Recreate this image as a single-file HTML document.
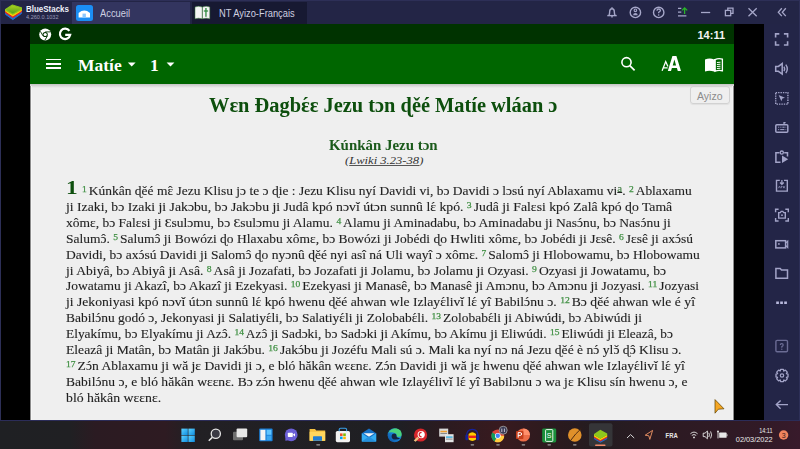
<!DOCTYPE html>
<html><head><meta charset="utf-8">
<style>
*{margin:0;padding:0;box-sizing:border-box}
html,body{width:800px;height:449px;overflow:hidden;background:#232546;font-family:"Liberation Sans",sans-serif}
.a{position:absolute;white-space:nowrap}
svg.a{overflow:visible}
.hd{font-family:"Liberation Serif",serif;font-weight:bold;color:#0d4f0d;will-change:transform}
.ln{position:absolute;white-space:nowrap;font-family:"Liberation Serif",serif;font-size:13px;line-height:16px;color:#1f1f1f;transform-origin:0 0;will-change:transform;-webkit-text-stroke:0.12px #222}
.cb{position:relative}.cb i{position:absolute;left:0;width:100%;text-align:center;top:0;font-style:normal}
.vn{color:#3f8f42;font-size:9.2px;font-weight:normal;-webkit-text-stroke:0.25px #3f8f42;position:relative;top:-2.6px;margin-right:1.9px}
.ch{color:#0d4f0d;font-weight:bold;font-size:19.5px;position:relative;top:-2px;margin-right:6px}
.fn{color:#48964a;font-size:10.5px;position:relative;top:-3.2px;text-decoration:underline;text-underline-offset:0px}
</style></head><body>
<!-- top bar -->
<div class="a" style="left:0;top:0;width:800px;height:24px;background:#232546"></div>
<div class="a" style="left:72px;top:2px;width:118px;height:22px;background:#33355f"></div>
<div class="a" style="left:192px;top:2px;width:115px;height:22px;background:#171932"></div>
<!-- logo -->
<svg class="a" style="left:0;top:0" width="26" height="24" viewBox="0 0 26 24">
 <defs><linearGradient id="lg" x1="0" y1="0" x2="0" y2="1"><stop offset="0" stop-color="#b2d41e"/><stop offset="1" stop-color="#4e9c1c"/></linearGradient></defs>
 <path d="M5.6 10.6 L12.8 15.4 L21.4 10.2 L21.4 13.6 L12.8 19.6 L5.6 14.4 Z" fill="#1b73d4" stroke="#1b73d4" stroke-width="1" stroke-linejoin="round"/>
 <path d="M5.6 10.2 L12.8 15 L21.4 9.8 L21.4 12 L12.8 17.6 L5.6 12.8 Z" fill="#e2242b" stroke="#e2242b" stroke-width="1" stroke-linejoin="round"/>
 <path d="M5.6 9.6 L12.8 14.2 L21.4 9.2 L21.4 10.6 L12.8 16 L5.6 11.2 Z" fill="#ffd000" stroke="#ffd000" stroke-width="1" stroke-linejoin="round"/>
 <path d="M5.6 9.6 L12.4 5 L21.4 7.8 L21.4 9.2 L12.8 14.2 L5.6 9.9 Z" fill="url(#lg)" stroke="#8cc41e" stroke-width="1.2" stroke-linejoin="round"/>
</svg>
<div class="a" style="left:25.6px;top:3.2px;font:bold 9.4px 'Liberation Sans',sans-serif;color:#eef0f8;transform:scaleX(0.85);transform-origin:0 0" id="bsname">BlueStacks</div>
<div class="a" style="left:26px;top:13px;font:6.2px 'Liberation Sans',sans-serif;color:#9a9bb8;transform:scaleX(0.9);transform-origin:0 0" id="bsver">4.260.0.1032</div>
<!-- tab1 icon -->
<div class="a" style="left:76px;top:4.5px;width:16.5px;height:16px;background:#1b8ef5;border-radius:2.5px"></div>
<svg class="a" style="left:76px;top:4.5px" width="17" height="16" viewBox="0 0 17 16">
 <path d="M2.6 8 Q8.3 3.2 14 8 L14 12.5 L2.6 12.5Z" fill="#fff"/>
 <rect x="6.5" y="8.6" width="3.4" height="3.9" fill="#8cc8ff"/>
</svg>
<div class="a" id="acc" style="left:100px;top:8px;font:10px 'Liberation Sans',sans-serif;color:#cfd0e0;transform-origin:0 0;transform:scaleX(0.935)">Accueil</div>
<!-- tab2 icon -->
<svg class="a" style="left:194px;top:5px" width="17" height="15" viewBox="0 0 17 15">
 <path d="M1 2 Q4.5 0.6 8.2 2 L8.2 13.8 Q4.5 12.6 1 13.8Z" fill="#f4f4f4" stroke="#3a7a3a" stroke-width="0.5"/>
 <path d="M8.5 2 Q12.2 0.6 15.8 2 L15.8 13.8 Q12.2 12.6 8.5 13.8Z" fill="#f4f4f4" stroke="#3a7a3a" stroke-width="0.5"/>
 <rect x="11.3" y="3" width="1.3" height="8.8" fill="#2e8a3e"/>
 <rect x="9.8" y="5.4" width="4.3" height="1.2" fill="#2e8a3e"/>
</svg>
<div class="a" id="ntay" style="left:218.5px;top:8px;font:10px 'Liberation Sans',sans-serif;color:#cfd0e0;transform-origin:0 0;transform:scaleX(0.93)">NT Ayizo-Français</div>
<!-- top right icons -->
<svg class="a" style="left:600px;top:0" width="200" height="24" viewBox="600 0 200 24" fill="none" stroke="#a6a7c9" stroke-width="1.4">
 <path d="M609 15.4 Q609.7 13.6 609.7 11.6 Q609.7 8.8 612 8.8 Q614.3 8.8 614.3 11.6 Q614.3 13.6 615 15.4" fill="none" stroke-width="1.4"/>
 <path d="M607.3 15.6 L616.7 15.6" />
 <path d="M612 15.6 L612 17.6" />
 <circle cx="612" cy="7.6" r="0.7" fill="#a6a7c9" stroke="none"/>
 <circle cx="635.4" cy="12.4" r="5.2"/>
 <circle cx="635.4" cy="10.3" r="1.3" stroke-width="1.1"/>
 <path d="M633.1 15.3 Q633.1 12.9 635.4 12.9 Q637.7 12.9 637.7 15.3 Z" fill="#a6a7c9" stroke="none"/>
 <circle cx="658.7" cy="12.4" r="5.2"/>
 <path d="M657 10.8 Q657 9 658.7 9 Q660.4 9 660.4 10.6 Q660.4 11.7 658.7 12.3 L658.7 13.3" stroke-width="1.3"/>
 <circle cx="658.7" cy="15" r="0.75" fill="#a6a7c9" stroke="none"/>
 <path d="M678 8.4 L681.3 8.4 M678 12.2 L681.3 12.2 M678 15.8 L686.4 15.8" stroke-width="1.2"/>
 <path d="M684.6 14 L684.6 8.2 M682 10.4 L684.6 7.8 L687.2 10.4" stroke="#28b428" stroke-width="1.3"/>
 <path d="M701 12.5 L710.2 12.5" stroke-width="1.3"/>
 <rect x="725.4" y="10.4" width="5.3" height="5.3" stroke-width="1.3"/>
 <path d="M727.8 10.3 L727.8 8.1 L733 8.1 L733 13.3 L730.8 13.3" stroke-width="1.3"/>
 <path d="M748.5 8.2 L756.7 16.2 M756.7 8.2 L748.5 16.2" stroke-width="1.3"/>
 <path d="M781.8 8.3 L778.3 12.2 L781.8 16.1 M785.8 8.3 L782.3 12.2 L785.8 16.1" stroke-width="1.3"/>
</svg>
<!-- left / right black -->
<div class="a" style="left:1px;top:24px;width:29px;height:396px;background:#000"></div>
<div class="a" style="left:734px;top:24px;width:30px;height:396px;background:#000"></div>
<div class="a" style="left:764px;top:24px;width:36px;height:396px;background:#232547"></div>
<div class="a" style="left:0;top:420px;width:800px;height:1px;background:#2b2c58"></div>
<div class="a" style="left:0;top:0;width:800px;height:1px;background:#2d2f57"></div>
<div class="a" style="left:0;top:0;width:1px;height:420px;background:#2d2f57"></div>
<div class="a" style="left:799px;top:0;width:1px;height:420px;background:#2d2f57"></div>

<svg class="a" style="left:764px;top:24px" width="36" height="396" viewBox="764 24 36 396" fill="none" stroke="#a3a4c8" stroke-width="1.6">
 <!-- fullscreen -->
 <path d="M775.6 37.6 L775.6 33.9 L779.3 33.9 M783.9 33.9 L787.6 33.9 L787.6 37.6 M787.6 41.3 L787.6 45 L783.9 45 M779.3 45 L775.6 45 L775.6 41.3"/>
 <!-- volume -->
 <path d="M775.7 66.4 L778.4 66.4 L782.2 63.6 L782.2 74 L778.4 71.3 L775.7 71.3 Z" stroke-width="1.5"/>
 <path d="M784 66.6 Q785.4 68.9 784 71.2" stroke-width="1.4"/>
 <path d="M785.8 64.6 Q788.8 68.9 785.8 73.2" stroke-width="1.4"/>
 <!-- cursor select -->
 <rect x="775.7" y="92.6" width="12.2" height="11.5" stroke-width="1.4" stroke-dasharray="1.4 1"/>
 <path d="M778.6 95 L785 97.7 L782.4 98.6 L781.4 101.3 Z" fill="#a3a4c8" stroke="none"/>
 <!-- keyboard -->
 <rect x="775.8" y="124.8" width="12" height="7.4" rx="1" stroke-width="1.5"/>
 <path d="M784 124.5 L784 122.7 L785.6 122.7" stroke-width="1.3"/>
 <path d="M778.2 127.2 L779.2 127.2 M780.4 127.2 L781.4 127.2 M782.4 127.2 L784.6 127.2 M785.6 127.2 L786.2 127.2 M778.2 129.6 L779.2 129.6 M780.2 129.6 L784.4 129.6 M785.6 129.6 L786.2 129.6" stroke-width="1"/>
 <!-- clipboard play -->
 <path d="M780.5 162.2 L775.9 162.2 L775.9 152.8 L779.5 152.8 M784.2 152.8 L787.5 152.8 L787.5 156.6" stroke-width="1.5"/>
 <circle cx="781.8" cy="152.6" r="1.6" stroke-width="1.3"/>
 <path d="M782 155.4 L788.2 159.2 L782 163 Z" fill="#a3a4c8" stroke="none"/>
 <!-- apk -->
 <path d="M779.8 180.4 L776.5 180.4 L776.5 191.1 L787.3 191.1 L787.3 180.4 L784 180.4" stroke-width="1.4"/>
 <path d="M781.9 180 L781.9 184.2 M780 182.5 L781.9 184.4 L783.8 182.5" stroke-width="1.3"/>
 <path d="M778.4 188.2 L779.4 186.2 L780.4 188.2 M781.2 188.2 L781.2 186.2 L782.4 186.6 L781.2 187.2 M783.5 186.2 L783.5 188.2 M783.6 187.3 L785.2 186.2 M783.8 187.1 L785.2 188.2" stroke-width="0.6"/>
 <!-- camera -->
 <path d="M775.6 212.3 L775.6 209.3 L778.6 209.3 M785.3 209.3 L788.3 209.3 L788.3 212.3 M788.3 218 L788.3 221 L785.3 221 M778.6 221 L775.6 221 L775.6 218" stroke-width="1.4"/>
 <path d="M778.7 212.6 L780.3 212.6 L781.2 211.4 L782.8 211.4 L783.7 212.6 L785.3 212.6 L785.3 218.1 L778.7 218.1 Z" stroke-width="1.4"/>
 <circle cx="782" cy="215.2" r="0.9" fill="#a3a4c8" stroke="none"/>
 <!-- video -->
 <rect x="775.8" y="240.7" width="9.8" height="7.2" stroke-width="1.5"/>
 <path d="M785.6 243.2 L787.7 241.1 L787.7 247.5 L785.6 245.4" stroke-width="1.2"/>
 <circle cx="778.9" cy="243.9" r="0.9" fill="#a3a4c8" stroke="none"/>
 <!-- folder -->
 <path d="M775.9 268.6 L780.2 268.6 L781.5 270.1 L787.5 270.1 L787.5 278.2 L775.9 278.2 Z" stroke-width="1.5"/>
 <!-- dots -->
 <rect x="776.2" y="301.5" width="2.7" height="2.5" fill="#b8b9dc" stroke="none"/>
 <rect x="780.2" y="301.5" width="2.7" height="2.5" fill="#b8b9dc" stroke="none"/>
 <rect x="784.2" y="301.5" width="2.7" height="2.5" fill="#b8b9dc" stroke="none"/>
 <!-- help box -->
 <rect x="775.9" y="340.4" width="11.6" height="11.4" rx="1.2" stroke="#6b6c94" stroke-width="1.4"/>
 <path d="M780.3 345.1 Q780.3 343.6 781.7 343.6 Q783.2 343.6 783.2 345 Q783.2 346 781.8 346.6 L781.8 347.7" stroke="#6b6c94" stroke-width="1.2"/>
 <circle cx="781.8" cy="349.3" r="0.7" fill="#6b6c94" stroke="none"/>
 <!-- gear -->
 <path d="M780.6 369.3 L783.4 369.3 L783.8 371 L785.4 370.1 L787.3 372.1 L786.4 373.6 L788 374.1 L788 376.9 L786.4 377.3 L787.3 378.9 L785.4 380.9 L783.8 380 L783.4 381.6 L780.6 381.6 L780.2 380 L778.6 380.9 L776.7 378.9 L777.6 377.3 L776 376.9 L776 374.1 L777.6 373.6 L776.7 372.1 L778.6 370.1 L780.2 371 Z" stroke-width="1.3" stroke-linejoin="round"/>
 <circle cx="782" cy="375.5" r="1.7" stroke-width="1.2"/>
 <!-- back arrow -->
 <path d="M788 404.6 L776.6 404.6 M780.6 400.4 L776.3 404.6 L780.6 408.8" stroke-width="1.4"/>
</svg>

<div class="a" style="left:30px;top:24px;width:704px;height:20px;background:#003300"></div>
<div class="a" style="left:30px;top:44px;width:704px;height:40px;background:#006600"></div>
<!-- chrome icon -->
<svg class="a" style="left:38px;top:27px" width="15" height="15" viewBox="0 0 15 15">
 <circle cx="7.2" cy="7.5" r="6" fill="#fff"/>
 <circle cx="7.2" cy="7.5" r="2.6" fill="#003300"/>
 <circle cx="7.2" cy="7.5" r="1.6" fill="#fff"/>
 <path d="M7.2 4.9 L12.4 4.9" stroke="#003300" stroke-width="0.9"/>
 <path d="M4.95 8.8 L2.35 4.3" stroke="#003300" stroke-width="0.9"/>
 <path d="M9.45 8.8 L6.85 13.3" stroke="#003300" stroke-width="0.9"/>
</svg>
<!-- G icon -->
<svg class="a" style="left:57px;top:27.2px" width="16" height="16" viewBox="0 0 16 16">
 <path d="M12.4 3.9 A5.2 5.2 0 1 0 13.2 7.9 L8.2 7.9" fill="none" stroke="#fff" stroke-width="2.2"/>
</svg>
<div class="a" style="left:697.5px;top:28.5px;font:bold 11px 'Liberation Sans',sans-serif;color:#f4f4f4">14:11</div>
<!-- toolbar -->
<div class="a" style="left:45.8px;top:58.6px;width:15.2px;height:1.7px;background:#fff"></div>
<div class="a" style="left:45.8px;top:63.1px;width:15.2px;height:1.7px;background:#fff"></div>
<div class="a" style="left:45.8px;top:67.2px;width:15.2px;height:1.7px;background:#fff"></div>
<div class="a" style="left:78px;top:54.5px;font:bold 17.5px 'Liberation Serif',serif;color:#fff">Matíe</div>
<svg class="a" style="left:127px;top:62px" width="10" height="6" viewBox="0 0 10 6"><path d="M0.8 0.4 L8.6 0.4 L4.7 4.4Z" fill="#fff"/></svg>
<div class="a" style="left:150px;top:54.5px;font:bold 17.5px 'Liberation Serif',serif;color:#fff">1</div>
<svg class="a" style="left:166px;top:62px" width="10" height="6" viewBox="0 0 10 6"><path d="M0.6 0.4 L8.4 0.4 L4.5 4.4Z" fill="#fff"/></svg>
<svg class="a" style="left:618px;top:54px" width="20" height="20" viewBox="618 54 20 20" fill="none" stroke="#fff">
 <circle cx="626.5" cy="62.2" r="4.6" stroke-width="1.6"/>
 <path d="M629.8 65.6 L634.6 70.4" stroke-width="1.7"/>
</svg>
<svg class="a" style="left:655px;top:50px" width="80" height="28" viewBox="655 50 80 28">
 <path fill="#fff" fill-rule="evenodd" d="M667.8 70.9 L672.4 56.1 L676.4 56.1 L681 70.9 L677.8 70.9 L676.9 68.1 L671.9 68.1 L671 70.9 Z M672.7 65.6 L676.1 65.6 L674.4 59.6 Z"/>
 <path fill="none" stroke="#fff" stroke-width="1.3" d="M662.1 70.8 L665.7 61.6 L667.9 66.6 M663.6 67.8 L667.6 67.8"/>
 <path fill="#fff" d="M705 59.4 Q709.8 57.6 714.2 59.4 L714.2 71.6 Q709.8 70.2 705 71.4 Z"/>
 <path fill="none" stroke="#fff" stroke-width="1.3" d="M715 59.6 Q718.6 58 722.4 59.2 L722.4 70.8 Q718.6 69.9 715 71.2 Z"/>
 <path fill="#fff" d="M714 58.9 L715.6 58.9 L715.6 71.6 L714 71.6 Z"/>
 <path d="M716.9 62.5 L720.5 62.2 M716.9 64.5 L720.5 64.2 M716.9 66.5 L720.5 66.2 M716.9 68.5 L720.5 68.2" stroke="#fff" stroke-width="1"/>
</svg>
<!-- content -->
<div class="a" style="left:30px;top:84px;width:704px;height:336px;background:#efefef"></div>
<div class="a" style="left:30px;top:84px;width:704px;height:4px;background:linear-gradient(#c4c4c4,#efefef)"></div>
<div class="a" style="left:690.2px;top:86.2px;width:40px;height:18.2px;border:1px solid #d2d2d2;border-radius:3px;box-shadow:0 1px 1px rgba(0,0,0,0.06)"></div>
<div class="a" style="left:697px;top:89.5px;font:10.5px 'Liberation Sans',sans-serif;color:#8c8c8c">Ayizo</div>
<!-- cursor -->
<svg class="a" style="left:712px;top:397px" width="16" height="19" viewBox="712 397 16 19">
 <path d="M715 399.6 L724 408.8 L718.4 409.2 L715 413.2 Z" fill="#f5a623" stroke="#5a4000" stroke-width="0.7" stroke-linejoin="round"/>
</svg>
<div class="a" style="left:30px;top:86px;width:1px;height:334px;background:#8c8c8c"></div>
<div class="a" style="left:31px;top:86px;width:1px;height:334px;background:#f6f6f6"></div>
<div class="a" style="left:732px;top:86px;width:1px;height:334px;background:#f4f4f4"></div>
<div class="a" style="left:733px;top:86px;width:1px;height:334px;background:#8c8c8c"></div>

<div class="a hd" style="left:208.5px;top:93.8px;font-size:20.4px;transform:scaleX(1.000);transform-origin:0 0" id="title">Wɛn Đagb<span class="cb">ɛ<i>ˊ</i></span>ɛ Jezu tɔn ɖěé Matíe wláan ɔ</div>
<div class="a hd" style="left:328.5px;top:137.5px;font-size:13.6px;color:#1a5a1a;transform:scaleX(1.097);transform-origin:0 0" id="sub">Kúnkân Jezu tɔn</div>
<div class="a" style="left:344.5px;top:154px;font:italic 11.2px 'Liberation Serif',serif;color:#333;transform:scaleX(1.125);transform-origin:0 0" id="ref">(<u style="text-decoration-color:#555">Lwiki 3.23-38</u>)</div>
<div class="a hd" id="chnum" style="left:65.6px;top:177px;font-size:19.5px;transform:scaleX(1.2);transform-origin:0 0">1</div>
<div class="ln" id="l0" style="top:182.97px;left:82.40px;transform:scaleX(1.0375)"><span class="vn">1</span>Kúnkân ɖěé m<span class="cb">ɛ<i>ˆ</i></span> Jezu Klisu jɔ te ɔ ɖie : Jezu Klisu nyí Davidi vi, bɔ Davidi ɔ lɔsú nyí Ablaxamu vi<span class="fn">a</span>. <span class="vn">2</span>Ablaxamu</div>
<div class="ln" id="l1" style="top:198.89px;left:65.50px;transform:scaleX(1.0553)">ji Izaki, bɔ Izaki ji Jakɔbu, bɔ Jakɔbu ji Judâ kpó nɔvǐ útɔn sunnû l<span class="cb">ɛ<i>ˊ</i></span> kpó. <span class="vn">3</span>Judâ ji Falɛsi kpó Zalâ kpó ɖo Tamâ</div>
<div class="ln" id="l2" style="top:214.81px;left:65.50px;transform:scaleX(1.0395)">xômɛ, bɔ Falɛsi ji Ɛsulɔmu, bɔ Ɛsulɔmu ji Alamu. <span class="vn">4</span>Alamu ji Aminadabu, bɔ Aminadabu ji Nas<span class="cb">ɔ<i>ˊ</i></span>nu, bɔ Nas<span class="cb">ɔ<i>ˊ</i></span>nu ji</div>
<div class="ln" id="l3" style="top:230.73px;left:65.50px;transform:scaleX(1.0382)">Salum<span class="cb">ɔ<i>ˆ</i></span>. <span class="vn">5</span>Salum<span class="cb">ɔ<i>ˆ</i></span> ji Bowózi ɖo Hlaxabu xômɛ, bɔ Bowózi ji Jobédi ɖo Hwliti xômɛ, bɔ Jobédi ji Jɛsê. <span class="vn">6</span>Jɛsê ji ax<span class="cb">ɔ<i>ˊ</i></span>sú</div>
<div class="ln" id="l4" style="top:246.65px;left:65.50px;transform:scaleX(1.0397)">Davidi, bɔ ax<span class="cb">ɔ<i>ˊ</i></span>sú Davidi ji Salom<span class="cb">ɔ<i>ˆ</i></span> ɖo nyɔnû ɖěé nyi asî ná Uli wayî ɔ xômɛ. <span class="vn">7</span>Salom<span class="cb">ɔ<i>ˆ</i></span> ji Hlobowamu, bɔ Hlobowamu</div>
<div class="ln" id="l5" style="top:262.57px;left:65.50px;transform:scaleX(1.0479)">ji Abiyâ, bɔ Abiyâ ji Asâ. <span class="vn">8</span>Asâ ji Jozafati, bɔ Jozafati ji Jolamu, bɔ Jolamu ji Ozyasi. <span class="vn">9</span>Ozyasi ji Jowatamu, bɔ</div>
<div class="ln" id="l6" style="top:278.49px;left:65.50px;transform:scaleX(1.0389)">Jowatamu ji Akazî, bɔ Akazî ji Ezekyasi. <span class="vn">10</span>Ezekyasi ji Manasê, bɔ Manasê ji Amɔnu, bɔ Amɔnu ji Jozyasi. <span class="vn">11</span>Jozyasi</div>
<div class="ln" id="l7" style="top:294.41px;left:65.50px;transform:scaleX(1.0499)">ji Jekoniyasi kpó nɔvǐ útɔn sunnû l<span class="cb">ɛ<i>ˊ</i></span> kpó hwenu ɖěé ahwan wle Izlay<span class="cb">ɛ<i>ˊ</i></span>livǐ l<span class="cb">ɛ<i>ˊ</i></span> yî Babil<span class="cb">ɔ<i>ˊ</i></span>nu ɔ. <span class="vn">12</span>Bɔ ɖěé ahwan wle é yî</div>
<div class="ln" id="l8" style="top:310.33px;left:65.50px;transform:scaleX(1.0367)">Babil<span class="cb">ɔ<i>ˊ</i></span>nu godó ɔ, Jekonyasi ji Salatiy<span class="cb">ɛ<i>ˊ</i></span>li, bɔ Salatiy<span class="cb">ɛ<i>ˊ</i></span>li ji Zolobab<span class="cb">ɛ<i>ˊ</i></span>li. <span class="vn">13</span>Zolobab<span class="cb">ɛ<i>ˊ</i></span>li ji Abiwúdi, bɔ Abiwúdi ji</div>
<div class="ln" id="l9" style="top:326.25px;left:65.50px;transform:scaleX(1.0298)">Elyakímu, bɔ Elyakímu ji Az<span class="cb">ɔ<i>ˆ</i></span>. <span class="vn">14</span>Az<span class="cb">ɔ<i>ˆ</i></span> ji Sadɔki, bɔ Sadɔki ji Akímu, bɔ Akímu ji Eliwúdi. <span class="vn">15</span>Eliwúdi ji Eleazâ, bɔ</div>
<div class="ln" id="l10" style="top:342.17px;left:65.50px;transform:scaleX(1.0473)">Eleazâ ji Matân, bɔ Matân ji Jak<span class="cb">ɔ<i>ˊ</i></span>bu. <span class="vn">16</span>Jak<span class="cb">ɔ<i>ˊ</i></span>bu ji Jozéfu Mali sú ɔ. Mali ka nyí nɔ ná Jezu ɖěé è n<span class="cb">ɔ<i>ˊ</i></span> yl<span class="cb">ɔ<i>ˇ</i></span> ɖ<span class="cb">ɔ<i>ˆ</i></span> Klisu ɔ.</div>
<div class="ln" id="l11" style="top:358.09px;left:65.50px;transform:scaleX(1.0452)"><span class="vn">17</span>Z<span class="cb">ɔ<i>ˊ</i></span>n Ablaxamu ji wă jɛ Davidi ji ɔ, e bló hăkân wɛɛnɛ. Z<span class="cb">ɔ<i>ˊ</i></span>n Davidi ji wă jɛ hwenu ɖěé ahwan wle Izlay<span class="cb">ɛ<i>ˊ</i></span>livǐ l<span class="cb">ɛ<i>ˊ</i></span> yî</div>
<div class="ln" id="l12" style="top:374.01px;left:65.50px;transform:scaleX(1.0439)">Babil<span class="cb">ɔ<i>ˊ</i></span>nu ɔ, e bló hăkân wɛɛnɛ. Bɔ z<span class="cb">ɔ<i>ˊ</i></span>n hwenu ɖěé ahwan wle Izlay<span class="cb">ɛ<i>ˊ</i></span>livǐ l<span class="cb">ɛ<i>ˊ</i></span> yî Babilɔnu ɔ wa jɛ Klisu sín hwenu ɔ, e</div>
<div class="ln" id="l13" style="top:389.93px;left:65.50px;transform:scaleX(1.0617)">bló hăkân wɛɛnɛ.</div>
<div class="a" style="left:0;top:421px;width:800px;height:28px;background:linear-gradient(90deg,#1f2023 0.0px,#202023 70.0px,#2b1b22 95.0px,#2e1b22 165.0px,#222024 190.0px,#1f1f23 400.0px,#2a1b20 440.0px,#381a1f 500.0px,#2a1a1e 560.0px,#231c20 600.0px,#2c1a22 660.0px,#311a26 760.0px,#381a2b 800.0px)"></div>
<svg class="a" style="left:0;top:421px" width="800" height="28" viewBox="0 421 800 28">
 <defs>
  <linearGradient id="wg" x1="0" y1="0" x2="1" y2="1"><stop offset="0" stop-color="#5fd3ff"/><stop offset="1" stop-color="#0f8de0"/></linearGradient>
 </defs>
 <!-- start -->
 <rect x="181.4" y="428.6" width="6.4" height="6.4" fill="url(#wg)"/>
 <rect x="188.4" y="428.6" width="6.4" height="6.4" fill="url(#wg)"/>
 <rect x="181.4" y="435.6" width="6.4" height="6.4" fill="url(#wg)"/>
 <rect x="188.4" y="435.6" width="6.4" height="6.4" fill="url(#wg)"/>
 <!-- search -->
 <circle cx="215.8" cy="433.8" r="4.6" fill="#3a3a44" stroke="#e6e6e6" stroke-width="1.3"/>
 <path d="M212.3 437.4 L208.8 440.8" stroke="#e6e6e6" stroke-width="1.5"/>
 <!-- task view -->
 <rect x="233" y="431.8" width="10" height="8.4" rx="1" fill="#6f6f6f"/>
 <rect x="236.6" y="428.4" width="10.6" height="8.8" rx="1" fill="#e8e8e8"/>
 <!-- widgets -->
 <rect x="259.2" y="428.5" width="13.4" height="12.8" rx="1" fill="#1a7fd8"/>
 <rect x="260.4" y="429.8" width="5" height="10.4" fill="#f4f4f4"/>
 <rect x="266.6" y="429.8" width="4.8" height="5" fill="#5fc4ff"/>
 <rect x="266.6" y="435.6" width="4.8" height="4.6" fill="#3aa6f0"/>
 <!-- teams -->
 <circle cx="291.2" cy="434.8" r="6.4" fill="#6b5fd6"/>
 <path d="M285.4 440.8 L285.4 436.4 L288.6 440.2Z" fill="#6b5fd6"/>
 <rect x="287.8" y="432.8" width="5" height="4.2" rx="0.8" fill="#fff"/>
 <path d="M292.8 434.8 L295 433.2 L295 436.6Z" fill="#fff"/>
 <!-- explorer -->
 <path d="M309.6 429 L315 429 L316.2 430.4 L325.2 430.4 L325.2 440.8 L309.6 440.8Z" fill="#f5c242"/>
 <rect x="309.6" y="431.8" width="15.6" height="9" fill="#ffd75e"/>
 <rect x="313" y="436.2" width="9" height="4.6" rx="0.6" fill="#1f7ed4"/>
 <rect x="316.2" y="444.2" width="4" height="1.2" rx="0.6" fill="#a0a0a0"/>
 <!-- store -->
 <rect x="335.8" y="431" width="14.2" height="11.2" rx="1.6" fill="#f2f2f2"/>
 <path d="M339.2 431.2 L339.2 429.6 Q339.2 428.2 340.6 428.2 L345.2 428.2 Q346.6 428.2 346.6 429.6 L346.6 431.2" fill="none" stroke="#3aa0e8" stroke-width="1.1"/>
 <rect x="340" y="433.4" width="2.6" height="2.6" fill="#f25022"/>
 <rect x="343.2" y="433.4" width="2.6" height="2.6" fill="#7fba00"/>
 <rect x="340" y="436.6" width="2.6" height="2.6" fill="#00a4ef"/>
 <rect x="343.2" y="436.6" width="2.6" height="2.6" fill="#ffb900"/>
 <!-- mail -->
 <path d="M361.8 433.2 L369 428.4 L376.2 433.2 L376.2 441.6 L361.8 441.6Z" fill="#1670c4"/>
 <path d="M363.6 433.2 L374.4 433.2 L369 436.8Z" fill="#f4f4f4"/>
 <path d="M361.8 433.2 L369 438.2 L376.2 433.2 L376.2 441.6 L361.8 441.6Z" fill="#35aef2"/>
 <path d="M361.8 441.6 L369 436.6 L376.2 441.6Z" fill="#2590dc"/>
 <!-- edge -->
 <defs><linearGradient id="eg" x1="0" y1="1" x2="1" y2="0"><stop offset="0" stop-color="#0b4f9e"/><stop offset="0.6" stop-color="#1a8de0"/><stop offset="1" stop-color="#3ccf7a"/></linearGradient></defs>
 <circle cx="394.6" cy="435.2" r="7" fill="url(#eg)"/>
 <path d="M388.4 432.6 Q391.5 428.2 396.4 428.6 Q401.4 429.4 401.6 434.4 Q401.6 436.6 399.4 436.8 L396.4 436.8 Q397.4 434.2 395.2 433.2 Q392.2 431.8 388.4 432.6Z" fill="#4bd37c"/>
 <path d="M396.6 436.4 Q396.6 433.4 394.4 433.4 Q391.6 433.4 391.6 436.4 Q391.6 439.4 395.4 439.6 Q398.8 439.6 401 437.4 Q399 438.4 397.4 437.6Z" fill="#14243e"/>
 <!-- ccleaner -->
 <circle cx="420.6" cy="435" r="6.6" fill="#d8262b"/>
 <circle cx="421.2" cy="434.6" r="3.6" fill="#fff"/>
 <path d="M421.6 432.4 Q419.2 432.4 419.2 434.6 Q419.2 436.8 421.6 436.8" fill="none" stroke="#d8262b" stroke-width="1.2"/>
 <path d="M413.8 440.6 L417.4 436.8 L419 438.4 L415.6 441.8Z" fill="#f0c080"/>
 <!-- docs app -->
 <rect x="439.2" y="428.6" width="9" height="8" fill="#d8d8d8"/>
 <rect x="440.4" y="430.8" width="6.6" height="1.5" fill="#f0a030"/>
 <rect x="440.4" y="433" width="6.6" height="1" fill="#8a8a8a"/>
 <rect x="445" y="434.2" width="8.6" height="8" fill="#e4e4e4"/>
 <rect x="446" y="436.4" width="6.6" height="1.4" fill="#3ab0e0"/>
 <rect x="446" y="438.6" width="6.6" height="1" fill="#8a8a8a"/>
 <!-- audacity -->
 <path d="M466.4 437 Q466.4 429.4 472.3 429.4 Q478.2 429.4 478.2 437" fill="none" stroke="#16229a" stroke-width="1.2"/>
 <rect x="465.4" y="434.6" width="2.8" height="5.6" rx="1.2" fill="#16229a"/>
 <rect x="476.4" y="434.6" width="2.8" height="5.6" rx="1.2" fill="#16229a"/>
 <path d="M468.6 434 Q472.3 430.6 476 434 L476 439.6 Q472.3 442.4 468.6 439.6Z" fill="#ffcc00"/>
 <rect x="468.6" y="435.6" width="7.4" height="2.4" fill="#e8201c"/>
 <rect x="470.6" y="444.2" width="3.6" height="1.2" rx="0.6" fill="#a0a0a0"/>
 <!-- chrome -->
 <circle cx="497.8" cy="435.8" r="6.4" fill="#db4437"/>
 <path d="M497.8 435.8 L492.2 432.6 A6.4 6.4 0 0 0 494.6 441.4Z" fill="#0f9d58"/>
 <path d="M497.8 435.8 L494.6 441.4 A6.4 6.4 0 0 0 504.2 435.8Z" fill="#ffcd40"/>
 <circle cx="497.8" cy="435.8" r="2.9" fill="#fff"/>
 <circle cx="497.8" cy="435.8" r="2.2" fill="#4285f4"/>
 <circle cx="503.2" cy="430.2" r="4" fill="#3a3a55" stroke="#a8a8a8" stroke-width="0.8"/>
 <path d="M501.8 428.6 L501.8 432 M504.4 428.6 L504.4 432" stroke="#d0d0e0" stroke-width="0.9"/>
 <rect x="496.2" y="444.2" width="3.6" height="1.2" rx="0.6" fill="#a0a0a0"/>
 <!-- powerpoint -->
 <circle cx="523.4" cy="435" r="6.6" fill="#ed6c47"/>
 <path d="M523.4 435 L523.4 428.4 A6.6 6.6 0 0 1 530 435Z" fill="#ff8f6b"/>
 <rect x="516" y="431" width="7.4" height="8" rx="0.8" fill="#c43e1c"/>
 <path d="M518.2 437.6 L518.2 432.6 L520.2 432.6 Q521.6 432.6 521.6 434 Q521.6 435.4 520.2 435.4 L518.2 435.4" fill="none" stroke="#fff" stroke-width="1"/>
 <rect x="521.6" y="444.2" width="3.6" height="1.2" rx="0.6" fill="#a0a0a0"/>
 <!-- green S -->
 <rect x="542.2" y="428.4" width="14" height="14" rx="1.4" fill="#1a8f3a"/>
 <rect x="545.6" y="429.6" width="7.2" height="11.8" rx="0.8" fill="none" stroke="#fff" stroke-width="0.9"/>
 <text x="549.2" y="438.4" font-family="Liberation Sans" font-size="7" fill="#fff" text-anchor="middle">S</text>
 <rect x="547.4" y="444.2" width="3.6" height="1.2" rx="0.6" fill="#a0a0a0"/>
 <!-- orange quill -->
 <circle cx="574.8" cy="435" r="6.8" fill="#e0902a"/>
 <path d="M571 440 Q575 434 581.4 428.4" fill="none" stroke="#402010" stroke-width="0.9"/>
 <rect x="573" y="444.2" width="3.6" height="1.2" rx="0.6" fill="#a0a0a0"/>
 <!-- bluestacks active -->
 <rect x="589" y="423.2" width="23.5" height="23.4" rx="2" fill="#353538"/>
 <path d="M594 437.6 L600.3 441.4 L607.2 437.6 L607.2 439 L600.3 442.8 L594 439Z" fill="#1a6fd0"/>
 <path d="M594 436.2 L600.3 440 L607.2 436.2 L607.2 437.8 L600.3 441.6 L594 437.8Z" fill="#e8262a"/>
 <path d="M594 434.8 L600.3 438.6 L607.2 434.8 L607.2 436.4 L600.3 440.2 L594 436.4Z" fill="#ffd200"/>
 <path d="M594 434 L600.3 429.8 L607.2 433.4 L607.2 435 L600.3 438.8 L594 435Z" fill="#8ec81e"/>
 <rect x="595" y="444.4" width="10.6" height="1.6" rx="0.8" fill="#f08a6a"/>
 <!-- tray -->
 <path d="M627 438 L630.6 434.6 L634.2 438" fill="none" stroke="#d8d8d8" stroke-width="1"/>
 <path d="M652.6 430.4 L645.2 435.2 L648.8 435.8 L649.8 439.4Z" fill="none" stroke="#e08a60" stroke-width="1"/>
 <text x="665.6" y="438" font-family="Liberation Sans" font-size="6.8" font-weight="bold" fill="#e6e6e6" textLength="12.2" lengthAdjust="spacingAndGlyphs">FRA</text>
 <path d="M690.4 433.8 Q694 430.4 697.6 433.8 M691.8 435.4 Q694 433.6 696.2 435.4" fill="none" stroke="#e8e8e8" stroke-width="0.9"/>
 <circle cx="694" cy="437.4" r="0.9" fill="#e8e8e8"/>
 <path d="M703.2 433.2 L705 433.2 L707.4 431 L707.4 438.8 L705 436.6 L703.2 436.6Z" fill="none" stroke="#e8e8e8" stroke-width="0.9"/>
 <path d="M708.8 432.8 Q710 434.9 708.8 437 M710.6 431.4 Q712.6 434.9 710.6 438.4" fill="none" stroke="#e8e8e8" stroke-width="0.9"/>
 <rect x="719.2" y="432.6" width="7.4" height="5.2" rx="0.6" fill="#e8e8e8"/>
 <rect x="726.6" y="434.2" width="0.8" height="2" fill="#e8e8e8"/>
 <path d="M718 431 L718 438.4" stroke="#e8e8e8" stroke-width="0.9"/>
 <circle cx="718" cy="431.4" r="0.9" fill="#e8e8e8"/>
 <text x="759.2" y="433" font-family="Liberation Sans" font-size="6.8" fill="#ececec" textLength="13.4" lengthAdjust="spacingAndGlyphs">14:11</text>
 <text x="735.8" y="441.8" font-family="Liberation Sans" font-size="6.8" fill="#ececec" textLength="36.8" lengthAdjust="spacingAndGlyphs">02/03/2022</text>
 <circle cx="783.6" cy="435" r="4.7" fill="#f0845e"/>
 <text x="783.6" y="437.6" font-family="Liberation Sans" font-size="7" fill="#3a1a1a" text-anchor="middle">3</text>
</svg>

</body></html>
